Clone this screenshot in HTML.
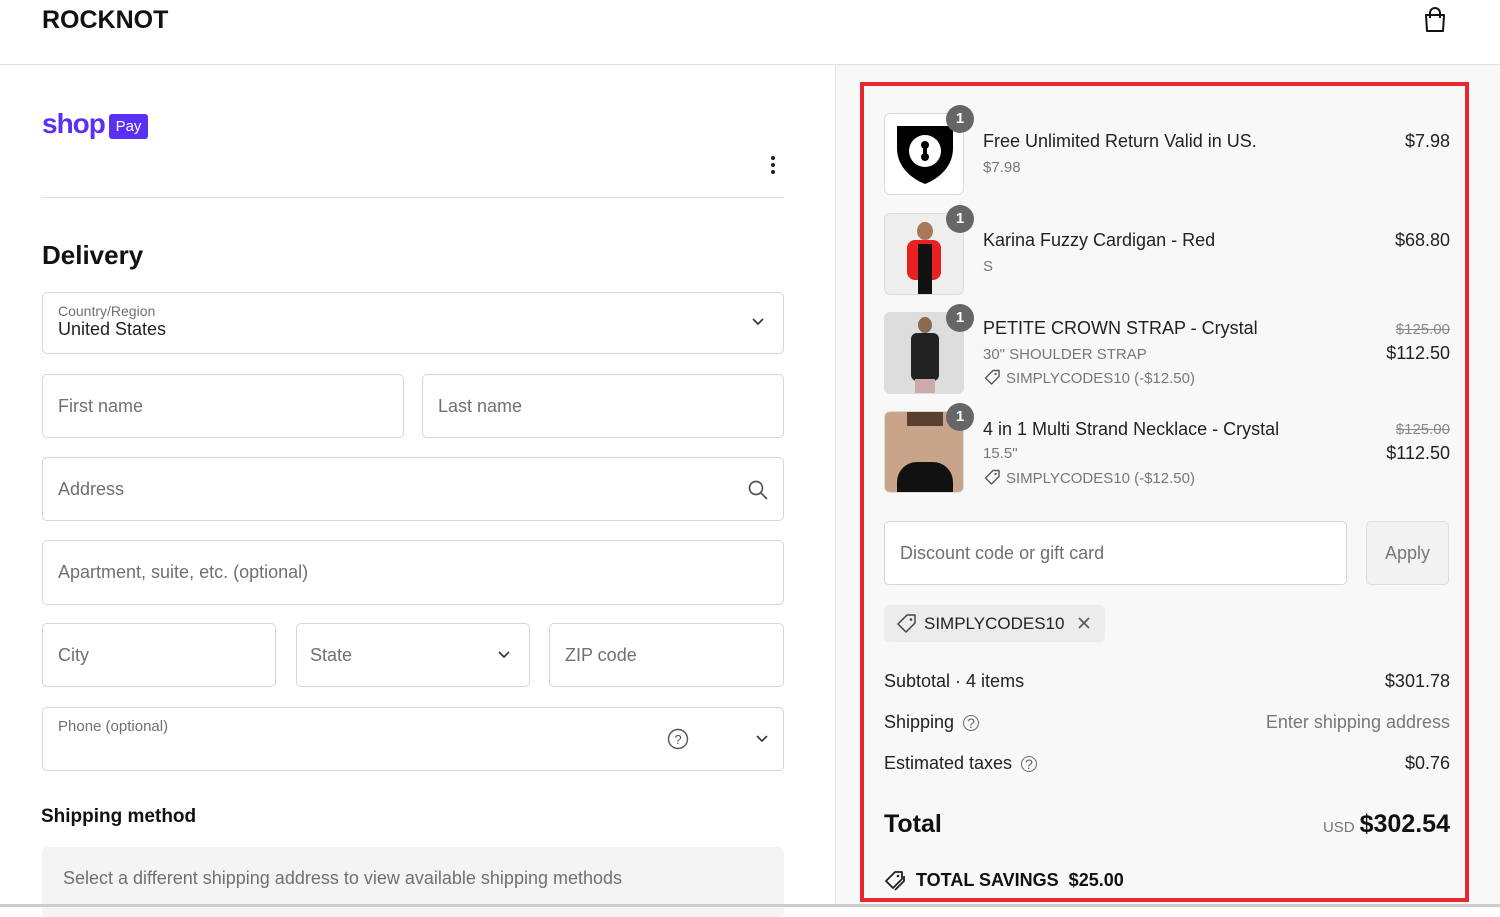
<!DOCTYPE html>
<html><head><style>
*{box-sizing:border-box;margin:0;padding:0}
body{width:1500px;height:907px;overflow:hidden;background:#fff;font-family:"Liberation Sans",sans-serif;color:#1a1a1a;position:relative}
.a{position:absolute}
.inp{position:absolute;border:1px solid #d6d6d6;border-radius:5px;background:#fff;font-size:18px;color:#707070;padding-left:15px;display:flex;align-items:center}
.rt{position:absolute;background:#f8f8f8;left:835px;top:65px;width:665px;height:842px;border-left:1px solid #e3e3e3}
.thumb{position:absolute;left:884px;width:80px;height:82px;border:1px solid #dcdcdc;border-radius:6px;background:#fff;overflow:hidden}
.badge{position:absolute;width:28px;height:28px;border-radius:50%;background:#666;color:#fff;font-size:15px;font-weight:bold;text-align:center;line-height:28px}
.nm{position:absolute;left:983px;font-size:18px;color:#222}
.sub{position:absolute;left:983px;font-size:15px;color:#777}
.pr{position:absolute;right:50px;font-size:18px;color:#222;text-align:right}
.st{position:absolute;right:50px;font-size:15px;color:#888;text-decoration:line-through}
.row{position:absolute;left:884px;width:566px;font-size:18px;display:flex;justify-content:space-between;color:#222}
.tg{display:inline-block;vertical-align:-3px;margin-right:5px}
</style></head><body>
<div class="a" style="left:42px;top:6px;font-size:25px;font-weight:bold;color:#111">ROCKNOT</div>
<svg class="a" style="left:1422px;top:6px" width="26" height="28" viewBox="0 0 26 28"><path d="M4 9h18l-1 16H5z" fill="none" stroke="#111" stroke-width="2" stroke-linejoin="round"/><path d="M8 12V7a5 5 0 0110 0v5" fill="none" stroke="#111" stroke-width="2"/></svg>
<div class="a" style="left:0;top:64px;width:1500px;height:1px;background:#e1e1e1"></div>
<div class="a" style="left:42px;top:108px;font-size:28px;font-weight:bold;color:#5a31f4;letter-spacing:-1px">shop</div>
<div class="a" style="left:109px;top:114px;width:39px;height:25px;background:#5a31f4;border-radius:3px;color:#fff;font-size:15px;text-align:center;line-height:25px">Pay</div>
<div class="a" style="left:771px;top:156px;width:4px;height:4px;border-radius:50%;background:#222;box-shadow:0 7px 0 #222,0 14px 0 #222"></div>
<div class="a" style="left:42px;top:197px;width:742px;height:1px;background:#dedede"></div>
<div class="a" style="left:42px;top:240px;font-size:26px;font-weight:bold;color:#111">Delivery</div>
<div class="inp" style="left:42px;top:292px;width:742px;height:62px;display:block;padding-top:10px"><div style="font-size:14px;color:#707070">Country/Region</div><div style="font-size:18px;color:#222">United States</div></div>
<svg class="a" style="left:752px;top:318px" width="12" height="8"><path d="M1 1l5 5 5-5" fill="none" stroke="#333" stroke-width="1.6"/></svg>
<div class="inp" style="left:42px;top:374px;width:362px;height:64px">First name</div>
<div class="inp" style="left:422px;top:374px;width:362px;height:64px">Last name</div>
<div class="inp" style="left:42px;top:457px;width:742px;height:64px">Address</div>
<svg class="a" style="left:748px;top:480px" width="20" height="20"><circle cx="8" cy="8" r="6.5" fill="none" stroke="#555" stroke-width="1.7"/><path d="M13 13l6 6" stroke="#555" stroke-width="1.7"/></svg>
<div class="inp" style="left:42px;top:540px;width:742px;height:65px">Apartment, suite, etc. (optional)</div>
<div class="inp" style="left:42px;top:623px;width:234px;height:64px">City</div>
<div class="inp" style="left:296px;top:623px;width:234px;height:64px;padding-left:13px">State</div>
<svg class="a" style="left:498px;top:651px" width="12" height="8"><path d="M1 1l5 5 5-5" fill="none" stroke="#333" stroke-width="1.6"/></svg>
<div class="inp" style="left:549px;top:623px;width:235px;height:64px">ZIP code</div>
<div class="inp" style="left:42px;top:707px;width:742px;height:64px;align-items:flex-start;padding-top:10px;font-size:15px">Phone (optional)</div>
<svg class="a" style="left:667px;top:728px" width="22" height="22"><circle cx="11" cy="11" r="9.5" fill="none" stroke="#555" stroke-width="1.4"/><text x="11" y="16" font-size="13" text-anchor="middle" fill="#555" font-family="Liberation Sans">?</text></svg>
<svg class="a" style="left:756px;top:735px" width="12" height="8"><path d="M1 1l5 5 5-5" fill="none" stroke="#333" stroke-width="1.6"/></svg>
<div class="a" style="left:41px;top:806px;font-size:19px;font-weight:bold;color:#111">Shipping method</div>
<div class="a" style="left:42px;top:847px;width:742px;height:70px;background:#f4f4f4;border-radius:5px;font-size:18px;color:#707070;padding:21px 0 0 21px">Select a different shipping address to view available shipping methods</div>

<div class="rt"></div>
<div class="a" style="left:860px;top:82px;width:609px;height:820px;border:4px solid #e8282f"></div>
<div class="a" style="left:0;top:904px;width:1500px;height:3px;background:#ccc"></div>

<div class="thumb" style="top:113px"><svg width="80" height="82" viewBox="0 0 80 82"><path d="M12 12h56v22c0 18-13 30-28 36C25 64 12 52 12 34z" fill="#000"/><circle cx="40" cy="37" r="16" fill="#fff"/><circle cx="40" cy="31" r="4" fill="#000"/><circle cx="40" cy="43" r="4" fill="#000"/><rect x="38" y="31" width="4" height="12" fill="#000"/></svg></div>
<div class="badge" style="left:946px;top:105px">1</div>
<div class="nm" style="top:131px">Free Unlimited Return Valid in US.</div>
<div class="sub" style="top:159px">$7.98</div>
<div class="pr" style="top:131px">$7.98</div>

<div class="thumb" style="top:213px;background:#eee"><div style="position:absolute;left:22px;top:26px;width:34px;height:40px;background:#e8201f;border-radius:8px"></div><div style="position:absolute;left:32px;top:8px;width:16px;height:18px;background:#a8785a;border-radius:50%"></div><div style="position:absolute;left:33px;top:30px;width:14px;height:50px;background:#111"></div></div>
<div class="badge" style="left:946px;top:205px">1</div>
<div class="nm" style="top:230px">Karina Fuzzy Cardigan - Red</div>
<div class="sub" style="top:258px">S</div>
<div class="pr" style="top:230px">$68.80</div>

<div class="thumb" style="top:312px;background:#ddd"><div style="position:absolute;left:26px;top:20px;width:28px;height:48px;background:#222;border-radius:6px"></div><div style="position:absolute;left:33px;top:4px;width:14px;height:16px;background:#8a6a50;border-radius:50%"></div><div style="position:absolute;left:30px;top:66px;width:20px;height:16px;background:#caa"></div></div>
<div class="badge" style="left:946px;top:304px">1</div>
<div class="nm" style="top:318px">PETITE CROWN STRAP - Crystal</div>
<div class="sub" style="top:346px">30" SHOULDER STRAP</div>
<div class="sub" style="top:369px;left:984px"><svg class="tg" width="17" height="17"><path d="M1.5 9L9 1.5h6v6L7.5 15z" fill="none" stroke="#555" stroke-width="1.4" stroke-linejoin="round"/><circle cx="11.5" cy="5" r="1.1" fill="#555"/></svg>SIMPLYCODES10 (-$12.50)</div>
<div class="st" style="top:321px">$125.00</div>
<div class="pr" style="top:343px">$112.50</div>

<div class="thumb" style="top:411px;background:#c8a58a"><div style="position:absolute;left:12px;top:50px;width:56px;height:32px;background:#111;border-radius:20px 20px 0 0"></div><div style="position:absolute;left:22px;top:0;width:36px;height:14px;background:#5a4030"></div></div>
<div class="badge" style="left:946px;top:403px">1</div>
<div class="nm" style="top:419px">4 in 1 Multi Strand Necklace - Crystal</div>
<div class="sub" style="top:445px">15.5"</div>
<div class="sub" style="top:469px;left:984px"><svg class="tg" width="17" height="17"><path d="M1.5 9L9 1.5h6v6L7.5 15z" fill="none" stroke="#555" stroke-width="1.4" stroke-linejoin="round"/><circle cx="11.5" cy="5" r="1.1" fill="#555"/></svg>SIMPLYCODES10 (-$12.50)</div>
<div class="st" style="top:421px">$125.00</div>
<div class="pr" style="top:443px">$112.50</div>

<div class="inp" style="left:884px;top:521px;width:463px;height:64px">Discount code or gift card</div>
<div class="a" style="left:1366px;top:521px;width:83px;height:64px;border:1px solid #ddd;border-radius:5px;background:#f2f2f2;color:#777;font-size:18px;text-align:center;line-height:62px">Apply</div>
<div class="a" style="left:884px;top:605px;width:221px;height:37px;background:#ececec;border-radius:5px;font-size:17px;color:#222;padding:9px 0 0 40px">SIMPLYCODES10</div>
<svg class="a" style="left:896px;top:613px" width="22" height="22"><path d="M2 11L11 2h8v8l-9 9z" fill="none" stroke="#444" stroke-width="1.5" stroke-linejoin="round"/><circle cx="15" cy="6.5" r="1.3" fill="#444"/></svg>
<svg class="a" style="left:1078px;top:617px" width="12" height="12"><path d="M1 1l10 10M11 1L1 11" stroke="#555" stroke-width="1.6"/></svg>

<div class="row" style="top:671px"><span>Subtotal · 4 items</span><span>$301.78</span></div>
<div class="row" style="top:712px"><span>Shipping <span style="font-size:14px;color:#666;border:1.3px solid #666;border-radius:50%;display:inline-block;width:16px;height:16px;text-align:center;line-height:14px;margin-left:4px">?</span></span><span style="color:#777">Enter shipping address</span></div>
<div class="row" style="top:753px"><span>Estimated taxes <span style="font-size:14px;color:#666;border:1.3px solid #666;border-radius:50%;display:inline-block;width:16px;height:16px;text-align:center;line-height:14px;margin-left:4px">?</span></span><span>$0.76</span></div>
<div class="row" style="top:810px;align-items:baseline"><span style="font-size:25px;font-weight:bold;color:#111">Total</span><span><span style="font-size:15px;color:#777">USD</span> <span style="font-size:25px;font-weight:bold;color:#111">$302.54</span></span></div>
<svg class="a" style="left:884px;top:870px" width="24" height="22"><path d="M2 11L11 2h7v7l-9 9z" fill="none" stroke="#222" stroke-width="1.8" stroke-linejoin="round"/><path d="M20 6v5l-9 9" fill="none" stroke="#222" stroke-width="1.8"/><circle cx="14" cy="6" r="1.3" fill="#222"/></svg>
<div class="a" style="left:916px;top:870px;font-size:18px;font-weight:bold;color:#111">TOTAL SAVINGS&nbsp; $25.00</div>
</body></html>
